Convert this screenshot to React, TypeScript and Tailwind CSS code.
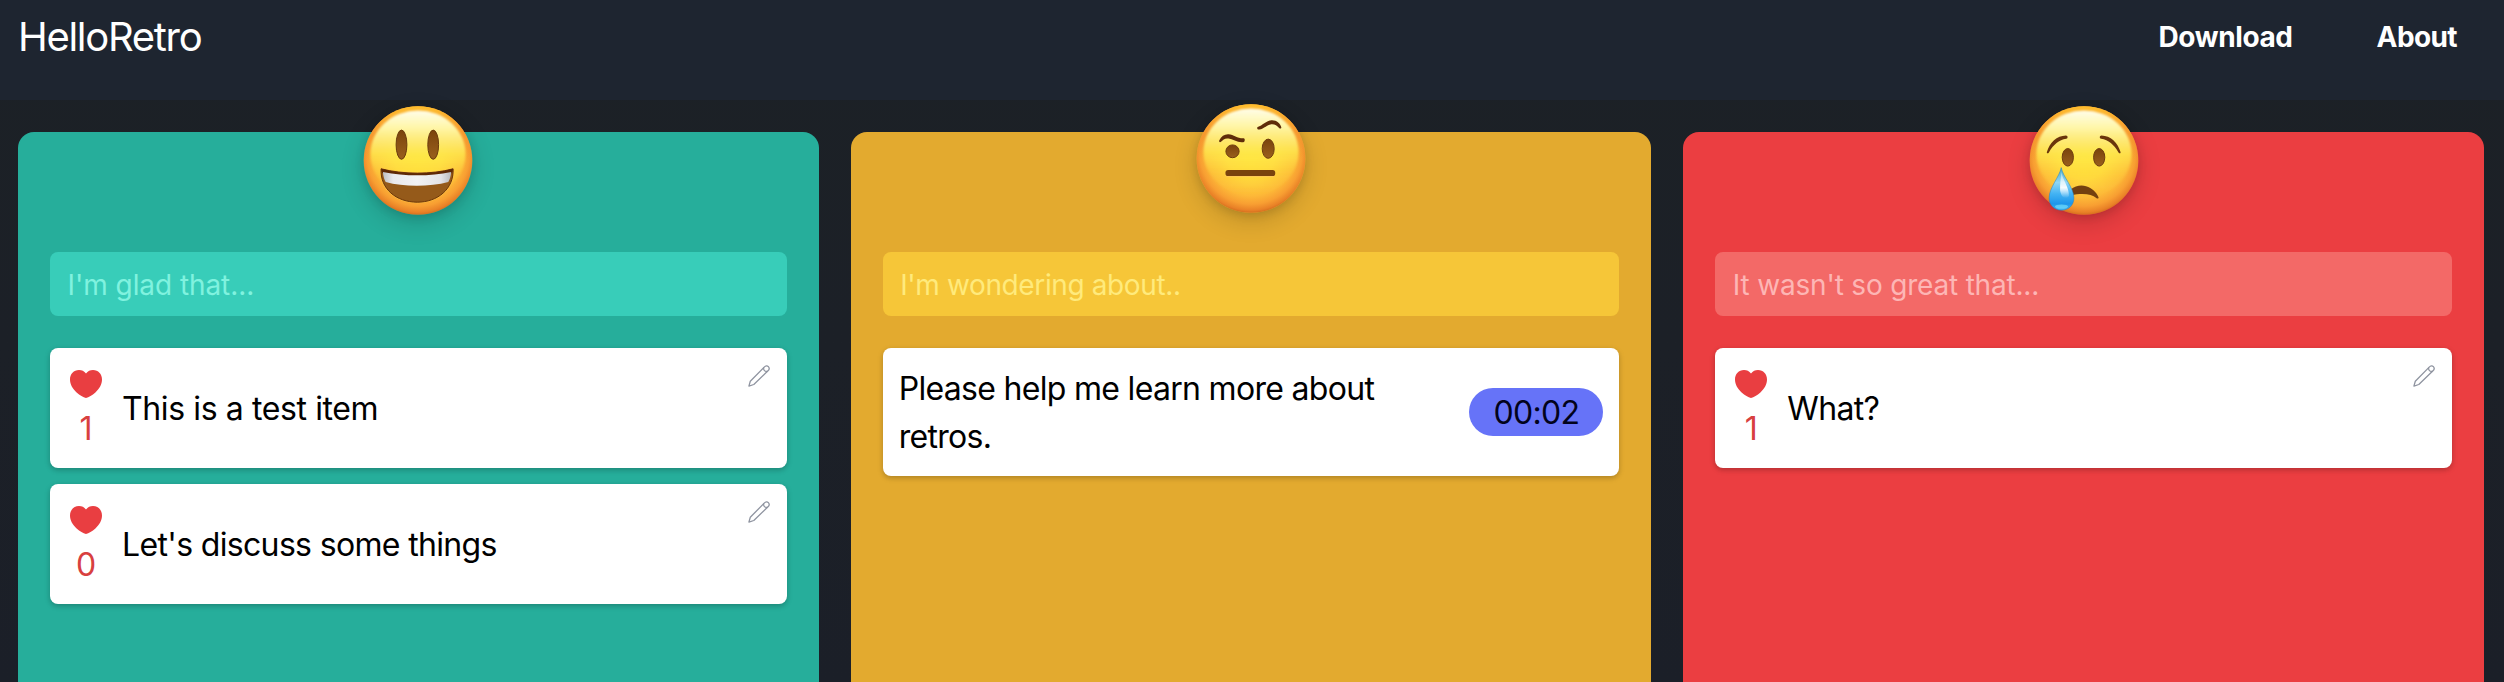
import React from "react";

type Item = { text: string; votes?: number; timer?: string; tracking: string };
type ColumnProps = {
  bg: string;
  input: string;
  placeholder: string;
  emoji: React.ReactNode;
  emojiTop: string;
  items: Item[];
};

function Face({ id, children }: { id: string; children: React.ReactNode }) {
  return (
    <svg viewBox="0 0 109 109" className="block size-[109px] overflow-visible">
      <defs>
        <radialGradient id={id + "-base"} cx="0.5" cy="0.45" r="0.56">
          <stop offset="0" stopColor="#ffe336" />
          <stop offset="0.4" stopColor="#ffd73c" />
          <stop offset="0.7" stopColor="#fdb938" />
          <stop offset="0.84" stopColor="#f89f32" />
          <stop offset="0.94" stopColor="#e98127" />
          <stop offset="1" stopColor="#cc671a" />
        </radialGradient>
        <linearGradient id={id + "-rim"} x1="0" y1="0" x2="0" y2="1">
          <stop offset="0" stopColor="#ffbe2c" />
          <stop offset="0.25" stopColor="#f6962d" stopOpacity="0.7" />
          <stop offset="0.5" stopColor="#ee8a2b" stopOpacity="0" />
        </linearGradient>
        <linearGradient id={id + "-shine"} x1="0" y1="0" x2="0" y2="1">
          <stop offset="0" stopColor="#fffdea" />
          <stop offset="0.2" stopColor="#fffaae" stopOpacity="0.95" />
          <stop offset="0.5" stopColor="#ffee50" stopOpacity="0.75" />
          <stop offset="0.75" stopColor="#ffe040" stopOpacity="0.25" />
          <stop offset="1" stopColor="#ffd840" stopOpacity="0" />
        </linearGradient>
        <linearGradient id={id + "-eye"} x1="0" y1="0" x2="0" y2="1">
          <stop offset="0" stopColor="#7a430c" />
          <stop offset="1" stopColor="#9a601d" />
        </linearGradient>
        <filter id={id + "-soft"} x="-10%" y="-10%" width="120%" height="120%">
          <feGaussianBlur stdDeviation="1.3" />
        </filter>
      </defs>
      <circle cx="54.5" cy="54.5" r="54.3" fill={`url(#${id}-base)`} />
      <circle cx="54.5" cy="54.5" r="54.3" fill={`url(#${id}-rim)`} />
      <ellipse cx="54.5" cy="48" rx="47.5" ry="43.5" fill={`url(#${id}-shine)`} filter={`url(#${id}-soft)`} />
      {children}
    </svg>
  );
}

function HappyFace() {
  return (
    <Face id="happy">
      <defs>
        <linearGradient id="happy-teeth" x1="0" y1="0" x2="1" y2="0">
          <stop offset="0" stopColor="#bfc0c4" />
          <stop offset="0.15" stopColor="#e9e9ec" />
          <stop offset="0.5" stopColor="#f2f2f4" />
          <stop offset="0.85" stopColor="#e3e3e6" />
          <stop offset="1" stopColor="#b9babd" />
        </linearGradient>
      </defs>
      <ellipse cx="38" cy="38.7" rx="5.4" ry="14.6" fill="url(#happy-eye)" stroke="#6a3a0c" strokeWidth="1" />
      <ellipse cx="69.7" cy="38.7" rx="5.4" ry="14.6" fill="url(#happy-eye)" stroke="#6a3a0c" strokeWidth="1" />
      <path d="M17.6 62.8C40 68.6 68 68.6 89.6 62.8C90.6 83 74 96.2 53.8 96.2C33 96.2 16.4 83 17.6 62.8Z" fill="#955a1a" stroke="#ffc44a" strokeOpacity="0.7" strokeWidth="2" />
      <path d="M17.6 62.8C40 68.6 68 68.6 89.6 62.8C90.6 83 74 96.2 53.8 96.2C33 96.2 16.4 83 17.6 62.8Z" fill="#955a1a" stroke="#6b3408" strokeWidth="1" strokeLinejoin="round" />
      <path d="M17.6 62.8C40 68.8 68 68.8 89.6 62.8L88.6 67C66 72 42 72 18.6 67Z" fill="#5e2806" />
      <path d="M19.4 65.9C42 70.4 66 70.4 87.7 65.9C87.4 69.6 86.5 73 84.8 75.9C66 81 40 81 22.2 75.9C20.5 73 19.6 69.6 19.4 65.9Z" fill="url(#happy-teeth)" />
    </Face>
  );
}

function RaisedBrowFace() {
  return (
    <Face id="brow">
      <ellipse cx="36" cy="47.3" rx="6.6" ry="6.4" fill="url(#brow-eye)" stroke="#6e3d0e" strokeWidth="1" />
      <ellipse cx="71.7" cy="44.7" rx="6" ry="9.6" fill="url(#brow-eye)" stroke="#6e3d0e" strokeWidth="1" />
      <rect x="29" y="66.8" width="49.7" height="6.2" rx="2.8" fill="#ffc65a" fillOpacity="0.8" />
      <rect x="29" y="66" width="49.7" height="6" rx="2.6" fill="#7a430d" />
      <path d="M22.8 36.2C24.8 32.2 28 30 32 30.2C37.4 30.6 41 34.6 47.2 34.3C48.6 34.3 48.6 36.8 47.6 38C42 39.4 36.6 35.4 32 34.6C28.4 34 26.6 36 24.2 38C23 38.6 22.2 37.4 22.8 36.2Z" fill="#5f2c09" />
      <path d="M61.2 23C66 21.6 69.4 16.4 75.6 16.2C80.4 16.2 84 19.6 84.8 23.2C85 24.8 83.6 25 82.6 24C80.6 21.6 78.6 20.2 75.6 20.2C71 20.4 67.6 24.6 62.8 25.6C60.8 25.8 60 23.6 61.2 23Z" fill="#5f2c09" />
    </Face>
  );
}

function CryingFace() {
  return (
    <Face id="cry">
      <defs>
        <linearGradient id="cry-tear" x1="0" y1="0" x2="0" y2="1">
          <stop offset="0" stopColor="#4aa9c9" />
          <stop offset="0.35" stopColor="#8fd6f6" />
          <stop offset="0.62" stopColor="#41b2f3" />
          <stop offset="0.85" stopColor="#1e96ea" />
          <stop offset="1" stopColor="#3fb4f2" />
        </linearGradient>
        <linearGradient id="cry-glint" x1="0" y1="0" x2="0" y2="1">
          <stop offset="0" stopColor="#ffffff" stopOpacity="0.3" />
          <stop offset="0.6" stopColor="#ffffff" stopOpacity="0.95" />
          <stop offset="1" stopColor="#ffffff" stopOpacity="0" />
        </linearGradient>
      </defs>
      <ellipse cx="38.3" cy="51.3" rx="5.6" ry="8.8" fill="url(#cry-eye)" stroke="#6e3d0e" strokeWidth="1" />
      <ellipse cx="69.7" cy="51.3" rx="5.6" ry="8.8" fill="url(#cry-eye)" stroke="#6e3d0e" strokeWidth="1" />
      <path d="M17.4 46C20 36.4 27.4 29.6 36.4 29.4C38.6 29.6 38.6 32.2 36.8 32.8C29.4 34 24 38.6 19.4 46.4C18.4 47.8 17 47.4 17.4 46Z" fill="#6a350c" />
      <path d="M91 46C88.4 36.4 81 29.6 72 29.4C69.8 29.6 69.8 32.2 71.6 32.8C79 34 84.4 38.6 89 46.4C90 47.8 91.4 47.4 91 46Z" fill="#6a350c" />
      <path d="M41 83.6C46 79.4 52 78.8 56.6 80.2C62.6 82 66.8 86 69 91.2C69.4 92.8 67.8 93 66.8 92C62 88.2 54 86.6 41 89.4Z" fill="#74400f" />
      <path d="M31.7 61.6C33.4 71 44.4 81.6 44.4 92C44.4 99.4 39 104.2 32 104.2C25 104.2 19.6 99.4 19.6 92C19.6 81.6 30 71 31.7 61.6Z" fill="url(#cry-tear)" stroke="#2b7fb8" strokeWidth="0.5" />
      <path d="M31.8 66C33.4 74 40 82 39.4 90C36 95 31 90 30.6 84C30.4 78 31.4 72 31.8 66Z" fill="url(#cry-glint)" />
      <ellipse cx="32" cy="100.6" rx="6.6" ry="2.2" fill="#7ce6fd" fillOpacity="0.6" />
    </Face>
  );
}

function Heart() {
  return (
    <svg viewBox="0 0 32 28" className="h-7 w-8" fill="#e93e41">
      <path d="M16 3.4C14.2 1.2 11.8 0 9 0C3.8 0 0 4 0 9.6C0 14.6 2.6 18.8 6.6 22.4C9.8 25.2 13.2 27.2 16 28C18.8 27.2 22.2 25.2 25.4 22.4C29.4 18.8 32 14.6 32 9.6C32 4 28.2 0 23 0C20.2 0 17.8 1.2 16 3.4Z" />
    </svg>
  );
}

function Pencil() {
  return (
    <svg viewBox="0 0 22 22" className="size-[22px]" fill="none" stroke="#8f94a0" strokeWidth="1.3" strokeLinejoin="round" strokeLinecap="round">
      <path d="M0.9 21.1L2.3 16.3L16.2 2.1C17.7 0.5 19.2 0.4 20.4 1.6C21.6 2.9 21.5 4.3 20 5.8L5.8 19.5Z" />
      <path d="M15.6 2.9C15.4 5.2 16.8 6.6 19 6.5" />
    </svg>
  );
}

function Card({ item }: { item: Item }) {
  return (
    <li className="flex items-center rounded-lg bg-white p-4 shadow-[0_2px_6px_rgba(0,0,0,0.14),0_2px_4px_rgba(0,0,0,0.1)]">
      {item.votes !== undefined && (
        <div className="mr-4 flex w-10 shrink-0 flex-col items-center text-[#d8403f]">
          <div className="flex h-10 items-center">
            <Heart />
          </div>
          <span className="-mb-px pt-px">{item.votes}</span>
        </div>
      )}
      <p className={"-mb-px min-w-0 flex-1 pt-px " + item.tracking}>{item.text}</p>
      {item.timer ? (
        <span className="ml-16 h-12 w-[134px] shrink-0 rounded-full bg-[#6673f8] pt-px text-center tracking-[-0.72px] text-[#02031c]">
          {item.timer}
        </span>
      ) : (
        <button className="mt-px mr-px self-start">
          <Pencil />
        </button>
      )}
    </li>
  );
}

function Column({ bg, input, placeholder, emoji, emojiTop, items }: ColumnProps) {
  return (
    <section className={"relative min-w-0 flex-1 rounded-t-2xl px-8 pt-[120px] " + bg}>
      <div className={"absolute left-1/2 -translate-x-1/2 rounded-full shadow-[0_8px_24px_rgba(0,0,0,0.16),0_2px_10px_rgba(0,0,0,0.12)] " + emojiTop}>
        {emoji}
      </div>
      <input
        className={"relative block h-16 w-full rounded-lg pt-0.5 pr-4 pl-[17.5px] text-[28px] outline-none " + input}
        placeholder={placeholder}
      />
      <ul className="mt-8 flex flex-col gap-4 text-[32px] leading-[48px] text-black">
        {items.map((item) => (
          <Card key={item.text} item={item} />
        ))}
      </ul>
    </section>
  );
}

export default function App() {
  return (
    <div className="flex h-[682px] flex-col overflow-hidden bg-linear-to-b from-[#1c2126] via-[#1c2027] to-[#1b1f28] font-['Inter','Noto_Sans',sans-serif] font-[440]">
      <header className="flex h-[100px] shrink-0 items-start justify-between bg-[#1e2530] pt-[9px] pr-[47px] pl-[18px] leading-[56px] text-white">
        <h1 className="text-[40px] font-[440] tracking-[-1.3px]">HelloRetro</h1>
        <nav className="flex gap-[84px] text-[28px] font-bold">
          <a className="tracking-[-0.39px]">Download</a>
          <a className="tracking-[-0.6px]">About</a>
        </nav>
      </header>
      <main className="flex flex-1 gap-8 pt-8 pr-5 pl-[18px]">
        <Column
          bg="bg-[#26ae9b]"
          input="bg-[#38cdb9] placeholder:text-[#80f2df] tracking-[-0.07px]"
          placeholder="I'm glad that..."
          emoji={<HappyFace />}
          emojiTop="-top-[26px]"
          items={[
            { text: "This is a test item", votes: 1, tracking: "tracking-[-0.39px]" },
            { text: "Let's discuss some things", votes: 0, tracking: "tracking-[-0.66px]" },
          ]}
        />
        <Column
          bg="bg-[#e3aa2f]"
          input="bg-[#f6c638] placeholder:text-[#ffea7c] tracking-[-0.38px]"
          placeholder="I'm wondering about.."
          emoji={<RaisedBrowFace />}
          emojiTop="-top-[28px]"
          items={[{ text: "Please help me learn more about retros.", timer: "00:02", tracking: "tracking-[-0.69px]" }]}
        />
        <Column
          bg="bg-[#eb3e41]"
          input="bg-[#f36967] placeholder:text-[#fdb6b5] tracking-[-0.19px]"
          placeholder="It wasn't so great that..."
          emoji={<CryingFace />}
          emojiTop="-top-[26px]"
          items={[{ text: "What?", votes: 1, tracking: "tracking-[-0.7px]" }]}
        />
      </main>
    </div>
  );
}
